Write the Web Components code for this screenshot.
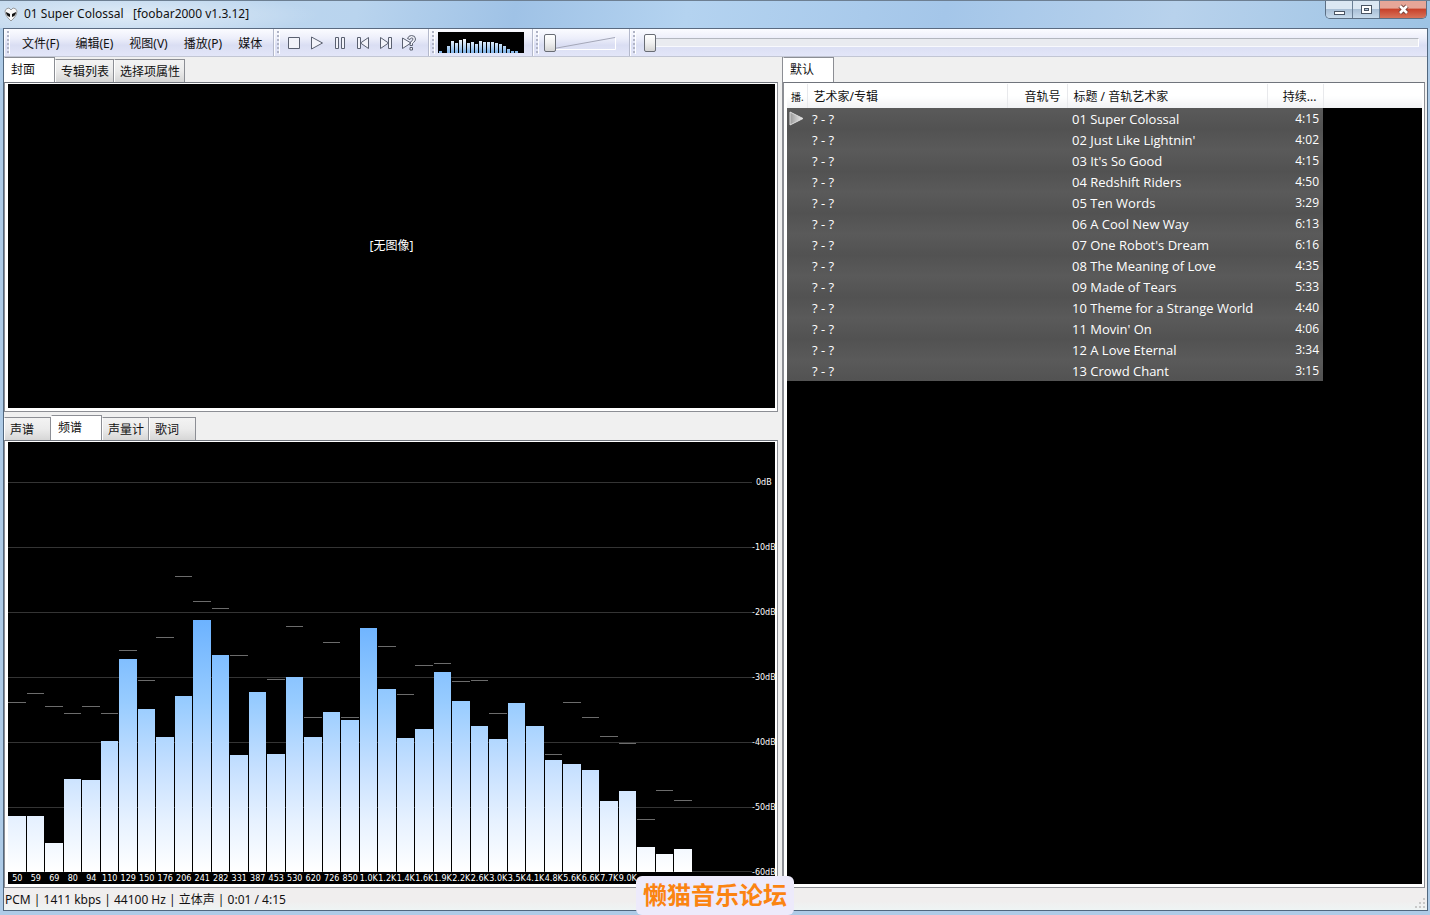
<!DOCTYPE html>
<html lang="zh-CN">
<head>
<meta charset="utf-8">
<title>01 Super Colossal [foobar2000 v1.3.12]</title>
<style>
  body {
    margin: 0;
    font: 12px/16px "Noto Sans", "Noto Sans CJK SC", sans-serif;
    color: #111;
  }
</style>
</head>
<body>
<player-window></player-window>

<script>
class TitleBar extends HTMLElement {
  connectedCallback() {
    this.attachShadow({ mode: "open" }).innerHTML = `
      <style>
        :host {
          display: flex;
          align-items: flex-start;
          height: 28px;
          padding: 0 3px 0 4px;
          box-sizing: border-box;
          background:
            radial-gradient(ellipse 190px 22px at 130px 14px, rgba(255, 255, 255, 0.5), transparent),
            linear-gradient(100deg, #c3d9ee 0%, #b9d4ee 25%, #9fc2e6 36%, #b4d3f0 48%, #a4c6e9 66%, #b8d2ec 82%, #9dc3e4 100%);
          border-top: 1px solid #6d7f92;
        }
        .logo { width: 14px; height: 14px; margin: 6px 6px 0 0; }
        h1 { margin: 5px 0 0; font: inherit; flex: 1; white-space: pre; }
        .controls {
          display: flex;
          border: 1px solid #5c6f84;
          border-top: 0;
          border-radius: 0 0 5px 5px;
          overflow: hidden;
        }
        button {
          width: 27px;
          height: 17px;
          padding: 0;
          border: 0;
          border-right: 1px solid #6a7f96;
          background: linear-gradient(#dbe7f3 0 45%, #a9bfd6 50%, #c7daeb);
          display: grid;
          place-items: center;
        }
        .close {
          width: 46px;
          border-right: 0;
          background: linear-gradient(#e6a698 0 40%, #c8432c 50%, #d8735a);
        }
      </style>
      <svg class="logo" viewBox="0 0 14 14">
        <path d="M1 4Q2 1 5 1L7 3L9 1Q12 1 13 4Q13 8 10 11L7 14L4 11Q1 8 1 4Z" fill="#f8f8f8" stroke="#777" stroke-width=".7"/>
        <path d="M2 5L6 7V10Q2 9 2 5ZM12 5L8 7V10Q12 9 12 5Z" fill="#111"/>
      </svg>
      <h1>01 Super Colossal   [foobar2000 v1.3.12]</h1>
      <div class="controls">
        <button aria-label="最小化"><svg width="13" height="13"><rect x="1.5" y="8.5" width="10" height="3" fill="#fff" stroke="#4a5564"/></svg></button>
        <button aria-label="最大化"><svg width="13" height="13"><rect x="1.5" y="2.5" width="10" height="8" fill="#fff" stroke="#4a5564"/><rect x="4.5" y="5.5" width="4" height="2" fill="#b4c8dc" stroke="#4a5564"/></svg></button>
        <button class="close" aria-label="关闭"><svg width="13" height="13"><path d="M3 3L10 10M10 3L3 10" stroke="#6b3a34" stroke-width="4.4"/><path d="M3 3L10 10M10 3L3 10" stroke="#fff" stroke-width="2.6"/></svg></button>
      </div>
    `;
  }
}

// one band of the toolbar: dotted grip, content, groove at the end
class ToolBand extends HTMLElement {
  connectedCallback() {
    this.attachShadow({ mode: "open" }).innerHTML = `
      <style>
        :host {
          display: flex;
          align-items: center;
          box-sizing: border-box;
          padding-left: 2px;
          border-right: 1px solid #b4b9cb;
          border-left: 1px solid #fdfdff;
        }
        .grip {
          width: 3px;
          align-self: stretch;
          margin: 2px 0;
          background: repeating-linear-gradient(#b0b4c6 0 2px, transparent 2px 4px);
          border-right: 1px solid #fff;
          box-sizing: border-box;
        }
      </style>
      <span class="grip"></span><slot></slot>
    `;
  }
}

class MenuStrip extends HTMLElement {
  connectedCallback() {
    const items = this.getAttribute("items").split(",");
    this.attachShadow({ mode: "open" }).innerHTML = `
      <style>
        :host { display: flex; padding-left: 4px; }
        button {
          padding: 2px 8px 0;
          border: 0;
          background: none;
          font: inherit;
          color: inherit;
          white-space: nowrap;
        }
      </style>
      ${items.map((item) => `<button>${item}</button>`).join("")}
    `;
  }
}

class PlaybackButtons extends HTMLElement {
  icons = {
    停止: `<path d="M2.5 2.5H13.5V13.5H2.5Z"/>`,
    播放: `<path d="M2.5 2L13.5 8L2.5 14Z"/>`,
    暂停: `<path d="M3.5 2.5H6.5V13.5H3.5ZM9.5 2.5H12.5V13.5H9.5Z"/>`,
    上一个: `<path d="M2.5 2.5H5.5V13.5H2.5ZM13.5 2.5V13.5L5.5 8Z"/>`,
    下一个: `<path d="M10.5 2.5H13.5V13.5H10.5ZM2.5 2.5V13.5L10.5 8Z"/>`,
    随机: `<path d="M1.5 3L10 8L1.5 13.5ZM6.5 3.5Q7.5 .5 10.5 .5Q14.5 .5 14.5 4Q14.5 6 12.5 7.5L11.5 8.5V10.5H9V7.5Q12 5.5 12 4Q12 3 10.5 3Q9.5 3 9 4.5ZM9 12.5H11.5V15H9Z"/>`,
  };

  connectedCallback() {
    this.attachShadow({ mode: "open" }).innerHTML = `
      <style>
        :host { display: flex; padding-left: 2px; }
        button { width: 23px; height: 22px; padding: 0; border: 0; background: none; display: grid; place-items: center; }
        svg { fill: #f2f3fa; stroke: #5a6070; stroke-width: 1; }
      </style>
      ${Object.entries(this.icons)
        .map(([name, shape]) => `<button aria-label="${name}"><svg width="16" height="16">${shape}</svg></button>`)
        .join("")}
    `;
  }
}

class MiniSpectrum extends HTMLElement {
  levels = [2, 0, 7, 12, 10, 13, 14, 10, 11, 9, 12, 11, 11, 11, 10, 9, 7, 4, 2, 2];

  connectedCallback() {
    this.attachShadow({ mode: "open" }).innerHTML = `
      <style>
        :host { display: block; line-height: 0; }
        svg { background: #000; }
      </style>
      <svg width="86" height="21" shape-rendering="crispEdges">
        <linearGradient id="fade" gradientUnits="userSpaceOnUse" x1="0" y1="6" x2="0" y2="20">
          <stop offset="0" stop-color="#fff"/><stop offset="1" stop-color="#86b8ea"/>
        </linearGradient>
        ${this.levels.map((h, i) => `<rect x="${i * 4 + 1}" y="${21 - h}" width="3" height="${h}" fill="url(#fade)"/>`).join("")}
      </svg>
    `;
  }
}

class TrackSlider extends HTMLElement {
  connectedCallback() {
    const wedge = this.hasAttribute("wedge");
    this.attachShadow({ mode: "open" }).innerHTML = `
      <style>
        :host { display: grid; align-items: center; }
        svg, input { grid-area: 1 / 1; min-width: 0; }
        input {
          appearance: none;
          width: 100%;
          height: 20px;
          margin: 0;
          background: none;
        }
        input::-webkit-slider-runnable-track {
          height: ${wedge ? 18 : 9}px;
          box-sizing: border-box;
          ${wedge ? "" : "background: #e9ebf0; border-top: 1px solid #b3b7bf; border-right: 1px solid #fff; border-bottom: 1px solid #f8f9fd;"}
        }
        input::-webkit-slider-thumb {
          appearance: none;
          box-sizing: border-box;
          width: 12px;
          height: 18px;
          ${wedge ? "" : "margin-top: -5px;"}
          border: 1px solid #686c74;
          border-radius: 2px;
          background: linear-gradient(#fff, #f0f0f0 50%, #d5d5d5);
        }
      </style>
      ${wedge ? `<svg width="72" height="18"><path d="M10 14.5L71 3.5" stroke="#a4a7b8"/><path d="M10 15.5H71.5V4" stroke="#fff" fill="none"/></svg>` : ""}
      <input type="range" min="0" max="100" value="0" aria-label="${this.getAttribute("label")}">
    `;
  }
}

// tabs="a,b,c" selected="index", the page of the selected tab goes in the slot
class TabPane extends HTMLElement {
  connectedCallback() {
    const selected = Number(this.getAttribute("selected"));
    const tabs = this.getAttribute("tabs").split(",");
    this.attachShadow({ mode: "open" }).innerHTML = `
      <style>
        :host { display: flex; flex-direction: column; min-width: 0; min-height: 0; }
        .tabs { display: flex; align-items: flex-end; height: 25px; }
        button {
          min-width: 47px;
          height: 23px;
          padding: 1px 4px 0 5px;
          border: 1px solid #8c8e94;
          border-left-color: #fff;
          border-bottom: 0;
          background: linear-gradient(#f3f3f3, #ebebeb 50%, #d6d6d6);
          font: inherit;
          color: inherit;
          text-align: left;
          white-space: nowrap;
        }
        button[aria-selected="true"] {
          min-width: 51px;
          height: 25px;
          padding: 0 5px 1px 6px;
          background: #fff;
        }
        .page {
          flex: 1;
          display: flex;
          min-height: 0;
          border: 1px solid #8c8e94;
          border-top-color: #70747c;
          padding: 1px 2px 3px 3px;
          background: #fff;
        }
        ::slotted(*) { flex: 1; min-width: 0; }
      </style>
      <div class="tabs" role="tablist">
        ${tabs.map((tab, i) => `<button role="tab" aria-selected="${i === selected}">${tab}</button>`).join("")}
      </div>
      <div class="page"><slot></slot></div>
    `;
  }
}

class AlbumArt extends HTMLElement {
  connectedCallback() {
    this.attachShadow({ mode: "open" }).innerHTML = `
      <style>
        :host { display: grid; place-items: center; background: #000; color: #fff; }
      </style>
      <span>[无图像]</span>
    `;
  }
}

class SpectrumChart extends HTMLElement {
  // the plot is 767 x 430 units, 0 dB at 40 and 65 units for each 10 dB
  plotWidth = 767;
  plotHeight = 430;
  labels = [
    "50", "59", "69", "80", "94", "110", "129", "150", "176", "206", "241", "282", "331",
    "387", "453", "530", "620", "726", "850", "1.0K", "1.2K", "1.4K", "1.6K", "1.9K", "2.2K",
    "2.6K", "3.0K", "3.5K", "4.1K", "4.8K", "5.6K", "6.6K", "7.7K", "9.0K",
  ];
  // [top of the bar, top of its peak mark]
  bands = [
    [374, 260], [374, 251], [401, 264], [337, 271], [338, 264], [299, 271], [217, 208],
    [267, 238], [295, 195], [254, 134], [178, 159], [213, 166], [313, 213], [250, 0],
    [312, 237], [235, 184], [295, 275], [270, 200], [278, 275], [186, 0], [247, 204],
    [296, 252], [287, 223], [230, 221], [259, 239], [284, 238], [297, 271], [261, 0],
    [284, 0], [318, 312], [322, 260], [328, 275], [359, 294], [349, 301], [405, 377],
    [412, 348], [407, 358],
  ];
  pitch = 18.5;

  connectedCallback() {
    const base = this.plotHeight;
    const lines = [0, 1, 2, 3, 4, 5, 6].map((n) => Math.min(40 + n * 65, base - 1));
    this.attachShadow({ mode: "open" }).innerHTML = `
      <style>
        :host {
          display: grid;
          grid-template-rows: 1fr 12px;
          background: #000;
          color: #fff;
          font-family: "DejaVu Sans", sans-serif;
          font-size: 8px;
          line-height: 12px;
          overflow: hidden;
        }
        .plot { grid-area: 1 / 1; width: 100%; height: 100%; min-height: 0; }
        .scale {
          grid-area: 1 / 1;
          justify-self: end;
          width: 23px;
          display: flex;
          flex-direction: column;
          justify-content: space-between;
          margin: 35px 0 -7px;
          white-space: nowrap;
        }
        .scale span { background: #000; }
        .scale span:first-child { padding-left: 4px; }
        .bands {
          display: grid;
          grid-template-columns: repeat(41, 37fr) 17fr;
          line-height: 14px;
        }
        .bands span { width: 0; justify-self: center; display: flex; justify-content: center; }
      </style>
      <svg class="plot" viewBox="0 0 ${this.plotWidth} ${base}" preserveAspectRatio="none" shape-rendering="crispEdges">
        <linearGradient id="level" gradientUnits="userSpaceOnUse" x1="0" y1="170" x2="0" y2="${base}">
          <stop offset="0" stop-color="#68b0ff"/>
          <stop offset=".35" stop-color="#98ccff"/>
          <stop offset=".6" stop-color="#c6e0ff"/>
          <stop offset=".8" stop-color="#e6f1ff"/>
          <stop offset="1" stop-color="#fff"/>
        </linearGradient>
        ${lines.map((y) => `<rect y="${y}" width="744" height="1" fill="#343434"/>`).join("")}
        ${this.bands.map(([top, peak], i) => this.printBand(i, top, peak)).join("")}
      </svg>
      <div class="scale">
        ${lines.map((_, n) => `<span>${n ? -n * 10 : 0}dB</span>`).join("")}
      </div>
      <div class="bands">${this.labels.map((label) => `<span>${label}</span>`).join("")}</div>
    `;
  }

  printBand(i, top, peak) {
    const x = Math.round(i * this.pitch);
    const width = Math.round((i + 1) * this.pitch) - x - 1;
    const mark = peak ? `<rect x="${x}" y="${peak}" width="${width}" height="1" fill="#6c6c6c"/>` : "";
    return `<rect x="${x}" y="${top}" width="${width}" height="${this.plotHeight - top}" fill="url(#level)"/>${mark}`;
  }
}

class TrackList extends HTMLElement {
  tracks = [
    ["01 Super Colossal", "4:15"],
    ["02 Just Like Lightnin'", "4:02"],
    ["03 It's So Good", "4:15"],
    ["04 Redshift Riders", "4:50"],
    ["05 Ten Words", "3:29"],
    ["06 A Cool New Way", "6:13"],
    ["07 One Robot's Dream", "6:16"],
    ["08 The Meaning of Love", "4:35"],
    ["09 Made of Tears", "5:33"],
    ["10 Theme for a Strange World", "4:40"],
    ["11 Movin' On", "4:06"],
    ["12 A Love Eternal", "3:34"],
    ["13 Crowd Chant", "3:15"],
  ];

  connectedCallback() {
    this.attachShadow({ mode: "open" }).innerHTML = `
      <style>
        :host { display: block; background: #000; }
        table { width: 100%; border-collapse: collapse; table-layout: fixed; }
        th, td { padding: 0 5px; white-space: nowrap; overflow: hidden; text-align: left; }
        th {
          height: 24px;
          padding: 1px 6px 0;
          box-sizing: border-box;
          border-right: 1px solid #e8e9ec;
          background: linear-gradient(#fff 50%, #f1f2f4);
          font-weight: normal;
        }
        th:first-child { padding: 1px 0 0 4px; font-size: 10px; }
        th:last-child { border-right: 0; }
        td { height: 21px; color: #fff; font-family: "Open Sans", sans-serif; font-size: 13px; line-height: 14px; }
        td:not(:last-child) { background: linear-gradient(#5a5a5a, #525252); }
        tr:nth-child(even) td:not(:last-child) { background: linear-gradient(#525252, #5a5a5a); }
        td:first-child { padding: 0 0 0 2px; line-height: 0; }
        .right { text-align: right; }
        td.right { padding-right: 4px; font-size: 12px; }
      </style>
      <table>
        <colgroup>
          <col style="width: 20px"><col style="width: 200px"><col style="width: 60px">
          <col style="width: 200px"><col style="width: 56px"><col>
        </colgroup>
        <thead>
          <tr>
            <th>播.</th>
            <th>艺术家/专辑</th>
            <th class="right">音轨号</th>
            <th>标题 / 音轨艺术家</th>
            <th class="right">持续...</th>
            <th></th>
          </tr>
        </thead>
        <tbody>
          ${this.tracks.map(([title, time], i) => `
            <tr>
              <td>${i === 0 ? this.playingMark() : ""}</td>
              <td>? - ?</td>
              <td></td>
              <td>${title}</td>
              <td class="right">${time}</td>
              <td></td>
            </tr>`).join("")}
        </tbody>
      </table>
    `;
  }

  playingMark() {
    return `<svg width="16" height="15">
      <linearGradient id="mark"><stop offset="0" stop-color="#999"/><stop offset="1" stop-color="#eee"/></linearGradient>
      <path d="M1 1L14 7.5L1 14Z" fill="url(#mark)" stroke="#ddd"/>
    </svg>`;
  }
}

class StatusBar extends HTMLElement {
  connectedCallback() {
    this.attachShadow({ mode: "open" }).innerHTML = `
      <style>
        :host {
          display: flex;
          align-items: center;
          justify-content: space-between;
          height: 22px;
          box-sizing: border-box;
          padding: 2px 0 0 1px;
          background: linear-gradient(#f0eeee 60%, #eef4f4);
        }
        svg { align-self: flex-end; }
      </style>
      <slot></slot>
      <svg width="12" height="12" fill="#c8c8c8"><path d="M8 0h2v2h-2zM8 4h2v2h-2zM4 4h2v2h-2zM8 8h2v2h-2zM4 8h2v2h-2zM0 8h2v2h-2z"/></svg>
    `;
  }
}

class ForumBadge extends HTMLElement {
  connectedCallback() {
    this.attachShadow({ mode: "open" }).innerHTML = `
      <style>
        :host {
          display: block;
          padding: 3px 7px 6px;
          border-radius: 6px;
          background: #edeafb;
          color: #fb8412;
          font: bold 24px/30px "Noto Sans CJK SC", sans-serif;
        }
      </style>
      <slot></slot>
    `;
  }
}

class PlayerWindow extends HTMLElement {
  connectedCallback() {
    this.attachShadow({ mode: "open" }).innerHTML = `
      <style>
        :host {
          display: flex;
          flex-direction: column;
          height: 100vh;
          position: relative;
          background: #aecbe7;
        }
        .client {
          flex: 1;
          min-height: 0;
          display: flex;
          flex-direction: column;
          margin: 0 2px 4px 3px;
          border: 1px solid #51677e;
          border-top-color: #5a6a80;
          background: #f0f0f0;
        }
        .toolbar {
          display: flex;
          height: 28px;
          box-sizing: border-box;
          border-bottom: 1px solid #c2c6d4;
          background: linear-gradient(#fbfcff, #eceefa 35%, #dadef3 60%, #e3e6f8);
        }
        .menu { width: 270px; }
        .playback { width: 155px; }
        .vis { width: 104px; }
        .volume { width: 97px; }
        .seek { flex: 1; border-right: 0; }
        mini-spectrum { margin-left: 3px; }
        .volume track-slider { width: 72px; margin-left: 5px; }
        .seek track-slider { flex: 1; margin: 0 8px; }
        .main {
          flex: 1;
          min-height: 0;
          display: grid;
          grid-template-columns: 774fr 645fr;
          column-gap: 4px;
        }
        .left {
          display: grid;
          grid-template-rows: 355fr 473fr;
          row-gap: 3px;
          min-width: 0;
          min-height: 0;
        }
        .right { border-left: 1px solid #8c8e94; padding: 0 2px 0 0; }
        forum-badge { position: absolute; bottom: 0; left: 50%; margin-left: -79px; }
      </style>
      <title-bar></title-bar>
      <div class="client">
        <div class="toolbar">
          <tool-band class="menu"><menu-strip items="文件(F),编辑(E),视图(V),播放(P),媒体"></menu-strip></tool-band>
          <tool-band class="playback"><playback-buttons></playback-buttons></tool-band>
          <tool-band class="vis"><mini-spectrum></mini-spectrum></tool-band>
          <tool-band class="volume"><track-slider wedge label="音量"></track-slider></tool-band>
          <tool-band class="seek"><track-slider label="播放位置"></track-slider></tool-band>
        </div>
        <div class="main">
          <div class="left">
            <tab-pane tabs="封面,专辑列表,选择项属性" selected="0"><album-art></album-art></tab-pane>
            <tab-pane tabs="声谱,频谱,声量计,歌词" selected="1"><spectrum-chart></spectrum-chart></tab-pane>
          </div>
          <tab-pane class="right" tabs="默认" selected="0"><track-list></track-list></tab-pane>
        </div>
        <status-bar>PCM | 1411 kbps | 44100 Hz | 立体声 | 0:01 / 4:15</status-bar>
      </div>
      <forum-badge>懒猫音乐论坛</forum-badge>
    `;
  }
}

customElements.define("title-bar", TitleBar);
customElements.define("tool-band", ToolBand);
customElements.define("menu-strip", MenuStrip);
customElements.define("playback-buttons", PlaybackButtons);
customElements.define("mini-spectrum", MiniSpectrum);
customElements.define("track-slider", TrackSlider);
customElements.define("tab-pane", TabPane);
customElements.define("album-art", AlbumArt);
customElements.define("spectrum-chart", SpectrumChart);
customElements.define("track-list", TrackList);
customElements.define("status-bar", StatusBar);
customElements.define("forum-badge", ForumBadge);
customElements.define("player-window", PlayerWindow);
</script>
</body>
</html>
